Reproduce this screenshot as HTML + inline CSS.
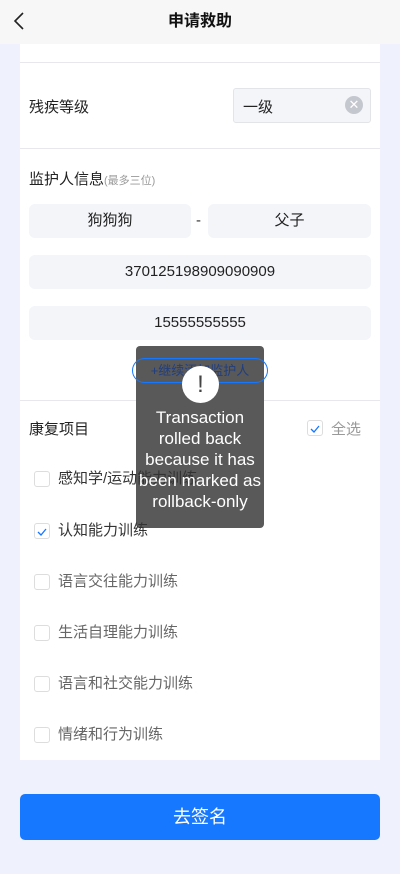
<!DOCTYPE html>
<html><head><meta charset="utf-8"><style>
*{margin:0;padding:0;box-sizing:border-box}
body{width:400px;height:874px;background:#eff1fc;font-family:"Liberation Sans","Noto Sans CJK SC",sans-serif;position:relative;overflow:hidden;color:#333}
.hd{position:absolute;left:0;top:0;width:400px;height:44px;background:#f7f7f7;text-align:center;line-height:44px;font-size:16px;font-weight:bold;color:#111}
.card{position:absolute;left:20px;top:44px;width:360px;height:716px;background:#fff}
.ab{position:absolute}
.line{position:absolute;left:20px;width:360px;height:1px;background:#e8e8ec}
.inp{position:absolute;background:#f4f5f9;border-radius:6px;text-align:center;font-size:15px;color:#222}
.lbl{position:absolute;left:29px;font-size:15px;color:#222}
.cb{position:absolute;left:34px;width:16px;height:16px;border:1px solid #ddd;border-radius:3px;background:#fff}
.it{position:absolute;left:58px;font-size:15px;color:#666;line-height:20px;z-index:2}
</style></head><body>
<div class="hd">申请救助</div>
<svg class="ab" style="left:12px;top:11px" width="14" height="20" viewBox="0 0 14 20"><path d="M11 2 L3 10 L11 18" fill="none" stroke="#222" stroke-width="1.6"/></svg>
<div class="card"></div>
<div class="line" style="top:62px"></div>
<div class="lbl" style="top:96px">残疾等级</div>
<div class="ab" style="left:233px;top:88px;width:138px;height:35px;background:#f4f5f9;border:1px solid #e3e4e8;border-radius:3px"></div>
<div class="ab" style="left:243px;top:96px;font-size:15px;color:#222">一级</div>
<div class="ab" style="left:345px;top:96px;width:18px;height:18px;border-radius:50%;background:#c5c7cf;color:#fff;font-size:13px;line-height:18px;text-align:center">✕</div>
<div class="line" style="top:148px"></div>
<div class="lbl" style="top:168px">监护人信息<span style="font-size:11px;color:#999">(最多三位)</span></div>
<div class="inp" style="left:29px;top:204px;width:162px;height:34px;line-height:34px">狗狗狗</div>
<div class="ab" style="left:196px;top:212px;font-size:15px">-</div>
<div class="inp" style="left:208px;top:204px;width:163px;height:34px;line-height:34px">父子</div>
<div class="inp" style="left:29px;top:255px;width:342px;height:34px;line-height:34px">370125198909090909</div>
<div class="inp" style="left:29px;top:306px;width:342px;height:34px;line-height:34px">15555555555</div>
<div class="ab" style="left:132px;top:358px;width:136px;height:25px;border:1px solid #1677ff;border-radius:13px;text-align:center;line-height:23px;font-size:13px;color:#213e7e;z-index:2">+继续添加监护人</div>
<div class="line" style="top:400px"></div>
<div class="lbl" style="top:418px">康复项目</div>
<div class="cb" style="left:307px;top:420px"></div>
<svg class="ab" style="left:309px;top:424px" width="12" height="10"><path d="M2 5 L5 8 L10 2" fill="none" stroke="#1677ff" stroke-width="1.3"/></svg>
<div class="ab" style="left:331px;top:418px;font-size:15px;color:#999">全选</div>
<div class="cb" style="top:471px"></div><div class="it" style="top:469px;color:#333">感知学/运动能力训练</div>
<div class="cb" style="top:523px"></div><svg class="ab" style="left:36px;top:527px" width="12" height="10"><path d="M2 5 L5 8 L10 2" fill="none" stroke="#1677ff" stroke-width="1.3"/></svg><div class="it" style="top:521px;color:#333">认知能力训练</div>
<div class="cb" style="top:574px"></div><div class="it" style="top:572px">语言交往能力训练</div>
<div class="cb" style="top:625px"></div><div class="it" style="top:623px">生活自理能力训练</div>
<div class="cb" style="top:676px"></div><div class="it" style="top:674px">语言和社交能力训练</div>
<div class="cb" style="top:727px"></div><div class="it" style="top:725px">情绪和行为训练</div>
<div class="ab" style="left:20px;top:794px;width:360px;height:46px;background:#1677ff;border-radius:5px;color:#fff;text-align:center;line-height:46px;font-size:18px">去签名</div>
<div class="ab" style="left:136px;top:346px;width:128px;height:182px;background:#595959;border-radius:4px;z-index:1"></div>
<div class="ab" style="left:182px;top:366px;width:37px;height:37px;border-radius:50%;background:#fff;color:#444;font-size:24px;line-height:37px;text-align:center;z-index:3">!</div>
<div class="ab" style="left:126px;top:407px;width:148px;font-size:17px;line-height:21px;color:#fff;text-align:center;z-index:3">Transaction<br>rolled back<br>because it has<br>been marked as<br>rollback-only</div>
</body></html>
